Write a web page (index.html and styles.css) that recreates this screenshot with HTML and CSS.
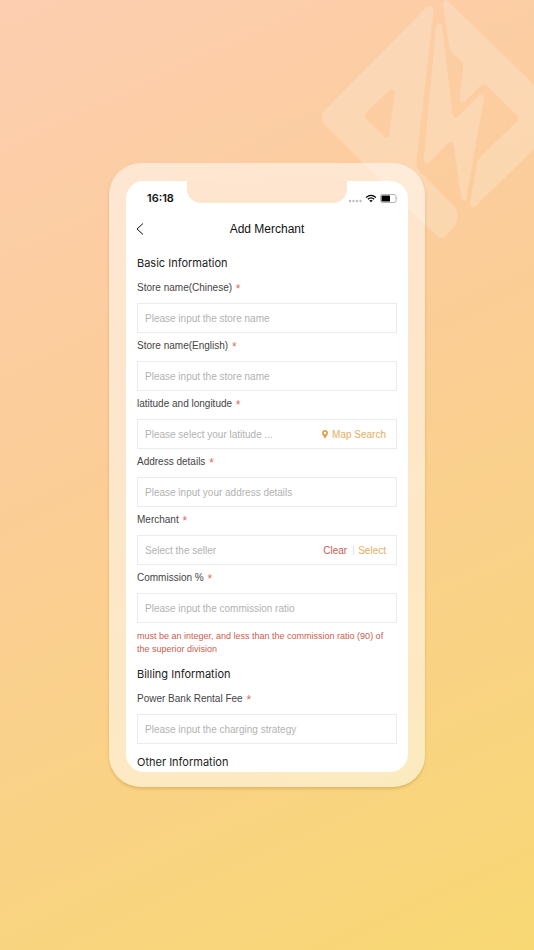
FILE: index.html
```html
<!DOCTYPE html>
<html lang="en">
<head>
<meta charset="utf-8">
<meta name="viewport" content="width=device-width, initial-scale=1">
<title>Add Merchant</title>
<link rel="stylesheet" href="styles.css">
</head>
<body>
<svg class="brand" viewBox="0 0 672 720" aria-hidden="true">
  <path fill-rule="evenodd" d="M350 22Q360 14 366 20Q371 25 370 36L319 488Q318 502 328 512L431 618Q444 632 443 652Q442 668 434 679L406 708Q393 721 380 709L45 374Q25 352 45 330ZM166 341Q161 348 166 354L222 409Q235 418 238 404L254 278Q252 264 239 269Z"/>
  <path d="M399 12Q402 -6 415 4L770 351L497 618Q484 628 480 612L500 494Q502 480 510 472L621 364Q628 356 621 347L531 258Q521 249 510 258L467 302Q450 317 449 297L460 202Q462 190 453 182L426 158Q419 151 418 142Z"/>
  <path d="M378 84Q380 71 387 71Q395 72 397 86L427 340Q432 358 445 348L504 289Q520 278 522 295L470 590Q467 602 461 602Q455 602 453 590L431 435Q426 420 415 430L362 484Q343 500 341 478Z"/>
</svg>
<main class="phone">
  <div class="screen">
    <div class="notch"></div>
    <div class="status">
      <span class="time">16:18</span>
      <span class="indicators">
        <svg class="dots" viewBox="0 0 14 4" aria-hidden="true"><circle cx="2" cy="2" r="1.2"/><circle cx="5.5" cy="2" r="1.2"/><circle cx="9" cy="2" r="1.2"/><circle cx="12.500" cy="2" r="1.2"/></svg>
        <svg class="wifi" viewBox="0 0 22 16" aria-hidden="true"><path d="M2 6.200Q11-1.800 20 6.200M5.300 9.400Q11 4.400 16.700 9.400"/><path class="solid" d="M7.800 11.700Q11 9.400 14.200 11.700L11 15Z"/></svg>
        <svg class="battery" viewBox="0 0 36 18" aria-hidden="true"><rect class="case" x="1" y="1" width="31" height="16" rx="4"/><rect x="3" y="3" width="17" height="12" rx="1"/><path class="cap" d="M33.500 6Q36 9 33.500 12Z"/></svg>
      </span>
    </div>
    <header class="bar">
      <button class="back" type="button" aria-label="Back"><svg viewBox="0 0 8 12" aria-hidden="true"><path d="M7 .5L1 6l6 5.500"/></svg></button>
      <h1>Add Merchant</h1>
    </header>
    <form class="form">
      <h2>Basic Information</h2>
      <div class="group">
        <label for="name-zh">Store name(Chinese) <b>*</b></label>
        <div class="field"><input id="name-zh" type="text" placeholder="Please input the store name"></div>
      </div>
      <div class="group">
        <label for="name-en">Store name(English) <b>*</b></label>
        <div class="field"><input id="name-en" type="text" placeholder="Please input the store name"></div>
      </div>
      <div class="group">
        <label for="location">latitude and longitude <b>*</b></label>
        <div class="field">
          <input id="location" type="text" placeholder="Please select your latitude ...">
          <button class="action" type="button"><svg class="pin" viewBox="0 0 12 18" aria-hidden="true"><path fill-rule="evenodd" d="M6 0C2.500 0 0 2.500 0 6C0 10 4 13 6 18C8 13 12 10 12 6C12 2.500 9.500 0 6 0ZM6 3.500A2.500 2.500 0 1 1 6 8.500A2.500 2.500 0 1 1 6 3.500Z"/></svg>Map Search</button>
        </div>
      </div>
      <div class="group">
        <label for="address">Address details <b>*</b></label>
        <div class="field"><input id="address" type="text" placeholder="Please input your address details"></div>
      </div>
      <div class="group">
        <label for="merchant">Merchant <b>*</b></label>
        <div class="field">
          <input id="merchant" type="text" placeholder="Select the seller">
          <button class="action clear" type="button">Clear</button>
          <span class="divider"></span>
          <button class="action" type="button">Select</button>
        </div>
      </div>
      <div class="group">
        <label for="commission">Commission % <b>*</b></label>
        <div class="field"><input id="commission" type="text" placeholder="Please input the commission ratio"></div>
      </div>
      <p class="hint">must be an integer, and less than the commission ratio (90) of the superior division</p>
      <h2>Billing Information</h2>
      <div class="group">
        <label for="fee">Power Bank Rental Fee <b>*</b></label>
        <div class="field"><input id="fee" type="text" placeholder="Please input the charging strategy"></div>
      </div>
      <h2>Other Information</h2>
    </form>
  </div>
</main>
</body>
</html>
```
FILE: styles.css
```css
* { box-sizing: border-box; }
body {
  margin: 0;
  min-height: 100vh;
  display: grid;
  place-items: center;
  position: relative;
  overflow-x: hidden;
  background: linear-gradient(155deg, #fdceb0 0%, #fbcd97 42%, #f8d873 100%);
  font-family: "Liberation Sans", sans-serif;
  font-size: 10px;
  color: #444;
}
button, input { font: inherit; border: 0; padding: 0; background: none; }
.brand {
  position: absolute;
  top: 0;
  right: 0;
  width: 224px;
  fill: #fff;
  opacity: .2;
}
.phone {
  position: relative;
  width: calc(100% - 218px);
  min-width: 316px;
  max-width: 340px;
  padding: 18px 17px 15px;
  border-radius: 32px;
  background: rgba(255, 255, 255, .5);
  box-shadow: 0 2px 3px rgba(190, 140, 60, .4);
}
.screen {
  position: relative;
  overflow: hidden;
  border-radius: 18px;
  background: #fff;
}
.notch {
  position: absolute;
  top: 0;
  left: 50%;
  width: 160px;
  height: 22px;
  margin-left: -80px;
  border-radius: 0 0 14px 14px;
  background: #fde5cf;
}
.status {
  display: flex;
  justify-content: space-between;
  align-items: center;
  height: 34px;
  padding: 0 10px 0 21px;
}
.time { font-family: Inter, sans-serif; font-size: 11px; font-weight: 600; color: #111; }
.indicators { display: flex; align-items: center; gap: 3px; }
.dots { width: 14px; height: 4px; margin-top: 5px; fill: #bbb; }
.wifi { width: 12px; height: 9px; fill: none; stroke: #000; stroke-width: 2.500; }
.wifi .solid { fill: #000; stroke: none; }
.battery { width: 18px; height: 9px; }
.battery .case { fill: none; stroke: #999; stroke-width: 1.500; }
.battery .cap { fill: #999; }
.bar {
  display: grid;
  grid-template-columns: 20px 1fr 20px;
  align-items: center;
  height: 28px;
  padding: 0 10px;
}
.bar h1 {
  margin: 0;
  text-align: center;
  font: 400 12px/16px "Liberation Sans", sans-serif;
  color: #111;
}
.back { display: flex; }
.back svg { width: 8px; height: 12px; fill: none; stroke: #111; stroke-width: 1; }
.form { padding: 7px 11px 0; }
h2 {
  margin: 3px 0 0;
  font-family: Inter, sans-serif;
  font-size: 11px;
  line-height: 20px;
  font-weight: 400;
  color: #222;
}
.group { padding: 7px 0 5px; }
.group + .group { padding-top: 0; }
.group label { display: block; margin-bottom: 7px; line-height: 16px; }
.group b {
  margin-left: 1px;
  font-size: 12px;
  line-height: 0;
  font-weight: 400;
  vertical-align: -2px;
  color: #d9705c;
}
.field {
  display: flex;
  align-items: center;
  height: 30px;
  padding: 0 10px 0 7px;
  border: 1px solid #ebebeb;
}
.field input { flex: 1; min-width: 0; height: 28px; outline: 0; color: #444; }
.field input::placeholder { color: #b2b2b2; opacity: 1; }
.action { display: flex; align-items: center; gap: 4px; color: #e5ae60; }
.pin { width: 6px; height: 9px; fill: #e5a04c; }
.clear { color: #cb5d50; }
.divider { width: 1px; height: 9px; margin: 0 4px 0 6px; background: #e5e5e5; }
.hint {
  margin: 2px 0 8px;
  font-size: 9px;
  line-height: 13px;
  color: #cb5d50;
}
```
